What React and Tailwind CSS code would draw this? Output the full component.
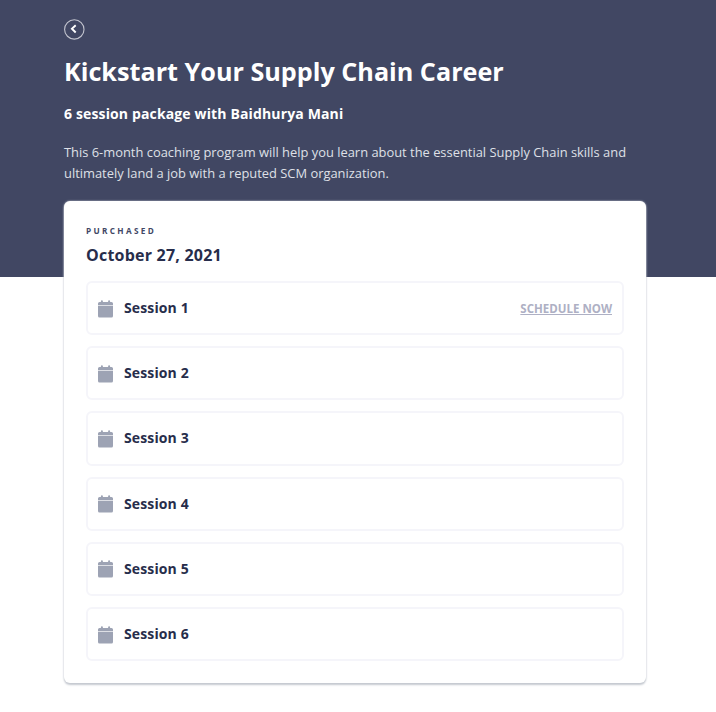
const sessions = [1, 2, 3, 4, 5, 6];

function CalendarIcon() {
  return (
    <svg width="15" height="18" viewBox="0 0 15 18" className="mt-px shrink-0" fill="#9da3b4">
      <path d="M0 4.900V3.500Q0 2 1.500 2H2.900V1.200a1 1 0 0 1 2 0V2h5.200V1.200a1 1 0 0 1 2 0V2h1.400Q15 2 15 3.500V4.900Z" />
      <path d="M0 6H15V16Q15 17.500 13.500 17.500H1.500Q0 17.500 0 16Z" />
      <path d="M0 4.900H15V6H0Z" opacity=".35" />
    </svg>
  );
}

function SessionRow({ number }) {
  return (
    <li className="flex h-[54.200px] items-center rounded-[6px] border-2 border-[#f5f5fa] pr-[10px] pl-[10px]">
      <CalendarIcon />
      <span className="ml-[11px] text-[14px] leading-5 font-bold tracking-[0.130px] whitespace-nowrap text-[#272d4b]">Session {number}</span>
      {number === 1 && (
        <a className="mt-px ml-auto text-[11.500px] leading-4 font-bold whitespace-nowrap text-[#aeb0c4] underline">SCHEDULE NOW</a>
      )}
    </li>
  );
}

export default function App() {
  return (
    <div className="h-[712px] overflow-hidden bg-white font-['Open_Sans','Noto_Sans',sans-serif]">
      <header className="h-[277px] bg-[#414763] pt-[19px] pl-16 text-white">
        <svg width="21" height="21" viewBox="0 0 21 21" className="block" fill="none">
          <circle cx="10.300" cy="10.400" r="9.700" stroke="#c3c5cf" strokeWidth="1.100" />
          <path d="M11.700 6.200 7.900 9.800l3.800 3.700" stroke="white" strokeWidth="1.900" />
        </svg>
        <h1 className="mt-[13px] text-[25.200px] leading-9 font-bold whitespace-nowrap">Kickstart Your Supply Chain Career</h1>
        <p className="mt-[15px] text-[14px] leading-5 font-bold tracking-[0.140px] whitespace-nowrap">6 session package with Baidhurya Mani</p>
        <p className="mt-[18px] text-[12.900px] leading-[21px] whitespace-nowrap text-[#dfe0e7]">
          This 6-month coaching program will help you learn about the essential Supply Chain skills and
          <br />
          ultimately land a job with a reputed SCM organization.
        </p>
      </header>
      <main className="relative mx-auto -mt-[76px] mr-[70px] ml-16 h-[482px] rounded-[6px] bg-white px-[22px] pt-[24px] shadow-[0_2px_2px_#c5c9d0,0_0_2px_#d5d8df]">
        <div className="text-[8.200px] leading-3 font-bold tracking-[2.350px] text-[#414765]">PURCHASED</div>
        <h2 className="mt-[6px] text-[16px] leading-6 font-bold tracking-[0.220px] text-[#272d4b]">October 27, 2021</h2>
        <ul className="mt-[14px] flex flex-col gap-[11px]">
          {sessions.map((number) => (
            <SessionRow key={number} number={number} />
          ))}
        </ul>
      </main>
    </div>
  );
}
